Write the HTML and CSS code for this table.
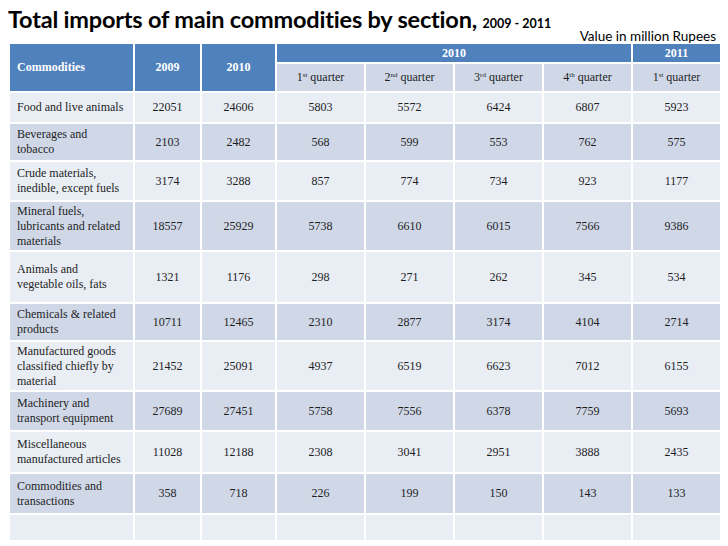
FILE: index.html
```html
<!DOCTYPE html>
<html>
<head>
<meta charset="utf-8">
<link rel="stylesheet" href="styles.css">
</head>
<body>
<div class="top">
  <h1 class="title">Total imports of main commodities by section, <span class="years">2009 - 2011</span></h1>
  <div class="note">Value in million Rupees</div>
</div>
<table class="data">
  <colgroup>
    <col class="c-name"><col class="c-y1"><col class="c-y2">
    <col class="c-q"><col class="c-q"><col class="c-q"><col class="c-q"><col class="c-q2">
  </colgroup>
  <thead>
    <tr class="h1">
      <th rowspan="2" class="left">Commodities</th>
      <th rowspan="2">2009</th>
      <th rowspan="2">2010</th>
      <th colspan="4">2010</th>
      <th>2011</th>
    </tr>
    <tr class="h2">
      <th class="q">1<sup>st</sup> quarter</th>
      <th class="q">2<sup>nd</sup> quarter</th>
      <th class="q">3<sup>rd</sup> quarter</th>
      <th class="q">4<sup>th</sup> quarter</th>
      <th class="q">1<sup>st</sup> quarter</th>
    </tr>
  </thead>
  <tbody>
    <tr class="r1 light"><td class="left">Food and live animals</td><td>22051</td><td>24606</td><td>5803</td><td>5572</td><td>6424</td><td>6807</td><td>5923</td></tr>
    <tr class="r2 dark"><td class="left">Beverages and<br>tobacco</td><td>2103</td><td>2482</td><td>568</td><td>599</td><td>553</td><td>762</td><td>575</td></tr>
    <tr class="r3 light"><td class="left">Crude materials,<br>inedible, except fuels</td><td>3174</td><td>3288</td><td>857</td><td>774</td><td>734</td><td>923</td><td>1177</td></tr>
    <tr class="r4 dark"><td class="left">Mineral fuels,<br>lubricants and related<br>materials</td><td>18557</td><td>25929</td><td>5738</td><td>6610</td><td>6015</td><td>7566</td><td>9386</td></tr>
    <tr class="r5 light"><td class="left">Animals and<br>vegetable oils, fats</td><td>1321</td><td>1176</td><td>298</td><td>271</td><td>262</td><td>345</td><td>534</td></tr>
    <tr class="r6 dark"><td class="left">Chemicals &amp; related<br>products</td><td>10711</td><td>12465</td><td>2310</td><td>2877</td><td>3174</td><td>4104</td><td>2714</td></tr>
    <tr class="r7 light"><td class="left">Manufactured goods<br>classified chiefly by<br>material</td><td>21452</td><td>25091</td><td>4937</td><td>6519</td><td>6623</td><td>7012</td><td>6155</td></tr>
    <tr class="r8 dark"><td class="left">Machinery and<br>transport equipment</td><td>27689</td><td>27451</td><td>5758</td><td>7556</td><td>6378</td><td>7759</td><td>5693</td></tr>
    <tr class="r9 light"><td class="left">Miscellaneous<br>manufactured articles</td><td>11028</td><td>12188</td><td>2308</td><td>3041</td><td>2951</td><td>3888</td><td>2435</td></tr>
    <tr class="r10 dark"><td class="left">Commodities and<br>transactions</td><td>358</td><td>718</td><td>226</td><td>199</td><td>150</td><td>143</td><td>133</td></tr>
    <tr class="r11 light"><td></td><td></td><td></td><td></td><td></td><td></td><td></td><td></td></tr>
  </tbody>
</table>
</body>
</html>
```
FILE: styles.css
```css
html, body {
  margin: 0;
  padding: 0;
  background: #ffffff;
}
body {
  width: 728px;
  height: 546px;
  overflow: hidden;
}
.top {
  display: flex;
  justify-content: space-between;
  align-items: flex-end;
  height: 42px;
  padding: 0 12px 0 8px;
  box-sizing: border-box;
}
.title {
  margin: 0;
  font-family: Lato, "Open Sans", sans-serif;
  font-weight: 700;
  font-size: 23.5px;
  letter-spacing: -0.2px;
  color: #000;
  line-height: 30px;
  align-self: flex-start;
  padding-top: 4px;
  white-space: nowrap;
}
.years {
  font-size: 12.5px;
  letter-spacing: 0;
}
.note {
  font-family: Lato, "Open Sans", sans-serif;
  font-size: 13.5px;
  color: #000;
  line-height: 14px;
  white-space: nowrap;
  margin-bottom: -1px;
}
.data {
  margin: 0 0 0 8px;
  width: 712px;
  table-layout: fixed;
  border-collapse: collapse;
  font-family: "Liberation Serif", "Times New Roman", serif;
  font-size: 12px;
  color: #1e1e1e;
}
.c-name { width: 125px; }
.c-y1 { width: 67px; }
.c-y2 { width: 75px; }
.c-q { width: 89px; }
.c-q2 { width: 89px; }
.data th, .data td {
  border: 2px solid #ffffff;
  padding: 0 3px;
  text-align: center;
  vertical-align: middle;
  line-height: 15px;
}
.data th {
  background: #4f81bd;
  color: #ffffff;
  font-weight: 700;
}
.data th.q {
  background: #d0d8e8;
  color: #1e1e1e;
  font-weight: 400;
}
.data .left {
  text-align: left;
  padding-left: 7px;
}
sup {
  font-size: 7px;
  line-height: 0;
  vertical-align: 4px;
}
.h1 { height: 20px; }
.h2 { height: 29px; }
.light td { background: #e9edf4; }
.dark td { background: #d0d8e8; }
.r1 { height: 31px; }
.r2 { height: 38px; }
.r3 { height: 40px; }
.r4 { height: 50px; }
.r5 { height: 52px; }
.r6 { height: 38px; }
.r7 { height: 50px; }
.r8 { height: 40px; }
.r9 { height: 42px; }
.r10 { height: 41px; }
.r11 { height: 27px; }
```
